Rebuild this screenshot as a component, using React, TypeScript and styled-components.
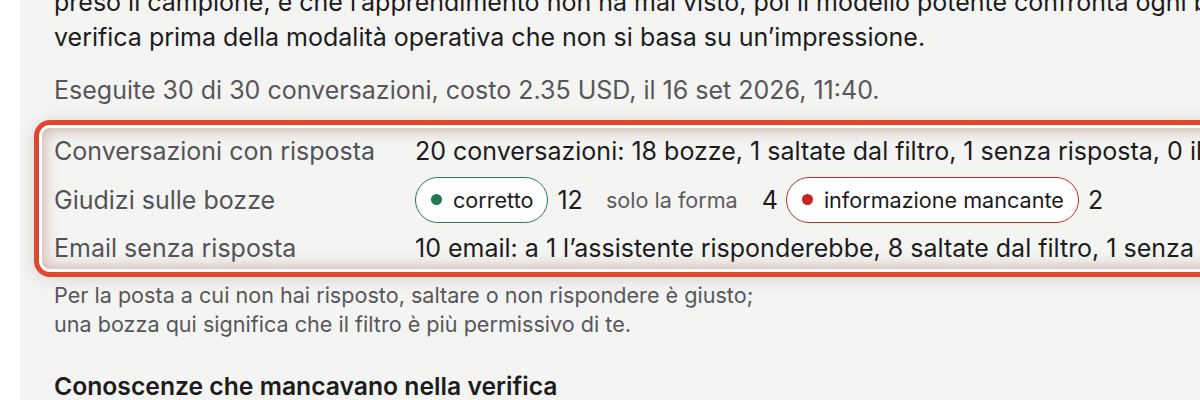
import React from 'react';
import styled, { createGlobalStyle } from 'styled-components';

const GlobalStyle = createGlobalStyle`
  html, body {
    margin: 0;
    padding: 0;
    background: #ffffff;
    overflow: hidden;
  }
  body {
    font-family: Inter, 'Noto Sans', sans-serif;
    color: #1d1d1f;
  }
`;

const Page = styled.div`
  padding-left: 20px;
  height: 400px;
  overflow: hidden;
`;

const Panel = styled.main`
  width: 1500px;
  min-height: 420px;
  background: #f4f4f2;
  padding: 0 0 0 34px;
  box-sizing: border-box;
`;

const Lead = styled.p`
  margin: -15px 0 0;
  font-size: 25px;
  line-height: 35px;
  color: #1c1c1e;
  white-space: nowrap;
`;

const Meta = styled.p`
  margin: 18px 0 0;
  font-size: 25px;
  line-height: 35px;
  color: #57575a;
`;

const Summary = styled.div`
  display: flex;
  flex-direction: column;
  gap: 8.5px;
  margin: 20px 0 0 -12px;
  padding: 6px 12px 4px;
  border-radius: 8px;
  background: #f4f4f2;
  box-shadow: inset 0 0 15px 1px rgba(140, 70, 55, 0.42), 0 0 0 3px #ffffff,
    0 0 0 8px #e0472c, 0 2px 18px 8px rgba(0, 0, 0, 0.13);
`;

const Row = styled.div`
  display: grid;
  grid-template-columns: 361px 1fr;
  align-items: center;
  min-height: 34px;
`;

const Label = styled.span`
  font-size: 25px;
  line-height: 34px;
  color: #535357;
`;

const Value = styled.span`
  font-size: 25px;
  line-height: 34px;
  color: #1c1c1e;
  white-space: nowrap;
`;

const Verdicts = styled.div`
  display: flex;
  align-items: center;
  gap: 8px;
`;

const Group = styled.span`
  display: inline-flex;
  align-items: center;
  gap: 9px;
`;

const Chip = styled.span<{ $tone?: 'green' | 'red' }>`
  display: inline-flex;
  align-items: center;
  gap: 11px;
  height: 46px;
  box-sizing: border-box;
  padding: 0 14px 0 ${(p) => (p.$tone ? '15px' : '14px')};
  border-radius: 23px;
  font-size: 21.6px;
  color: ${(p) => (p.$tone ? '#1c1c1e' : '#5c5c60')};
  background: ${(p) => (p.$tone ? '#ffffff' : 'transparent')};
  border: 1.5px solid
    ${(p) =>
      p.$tone === 'green' ? '#247a56' : p.$tone === 'red' ? '#b5312a' : 'transparent'};
`;

const Dot = styled.span<{ $tone: 'green' | 'red' }>`
  width: 11px;
  height: 11px;
  border-radius: 50%;
  background: ${(p) => (p.$tone === 'green' ? '#1f7a52' : '#c2281f')};
`;

const Count = styled.span`
  font-size: 25px;
  color: #1c1c1e;
`;

const Note = styled.p`
  margin: 12px 0 0;
  font-size: 21.6px;
  line-height: 29.2px;
  color: #57575a;
`;

const Heading = styled.h3`
  margin: 30px 0 0;
  font-size: 24.7px;
  line-height: 35px;
  font-weight: 600;
  color: #1c1c1e;
`;

type Verdict = { label: string; count: number; tone?: 'green' | 'red' };

const verdicts: Verdict[] = [
  { label: 'corretto', count: 12, tone: 'green' },
  { label: 'solo la forma', count: 4 },
  { label: 'informazione mancante', count: 2, tone: 'red' },
];

export default function App() {
  return (
    <>
      <GlobalStyle />
      <Page>
        <Panel>
          <Lead>
            preso il campione, e che l’apprendimento non ha mai visto, poi il modello potente confronta ogni bozza con la
            <br />
            verifica prima della modalità operativa che non si basa su un’impressione.
          </Lead>
          <Meta>Eseguite 30 di 30 conversazioni, costo 2.35 USD, il 16 set 2026, 11:40.</Meta>
          <Summary>
            <Row>
              <Label>Conversazioni con risposta</Label>
              <Value>
                20 conversazioni: 18 bozze, 1 saltate dal filtro, 1 senza risposta, 0 illeggibili
              </Value>
            </Row>
            <Row>
              <Label>Giudizi sulle bozze</Label>
              <Verdicts>
                {verdicts.map((v) => (
                  <Group key={v.label}>
                    <Chip $tone={v.tone}>
                      {v.tone && <Dot $tone={v.tone} />}
                      {v.label}
                    </Chip>
                    <Count>{v.count}</Count>
                  </Group>
                ))}
              </Verdicts>
            </Row>
            <Row>
              <Label>Email senza risposta</Label>
              <Value>
                10 email: a 1 l’assistente risponderebbe, 8 saltate dal filtro, 1 senza risposta
              </Value>
            </Row>
          </Summary>
          <Note>
            Per la posta a cui non hai risposto, saltare o non rispondere è giusto;
            <br />
            una bozza qui significa che il filtro è più permissivo di te.
          </Note>
          <Heading>Conoscenze che mancavano nella verifica</Heading>
        </Panel>
      </Page>
    </>
  );
}
